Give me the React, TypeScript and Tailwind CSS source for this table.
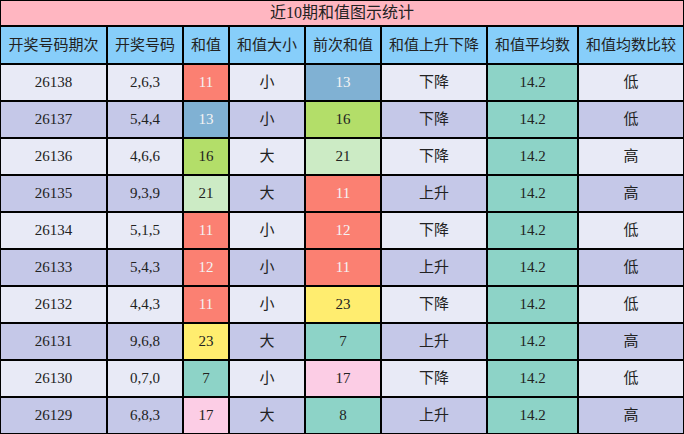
const rows = [
  ["26138", "2,6,3", 11, "小", 13, "下降", "低"],
  ["26137", "5,4,4", 13, "小", 16, "下降", "低"],
  ["26136", "4,6,6", 16, "大", 21, "下降", "高"],
  ["26135", "9,3,9", 21, "大", 11, "上升", "高"],
  ["26134", "5,1,5", 11, "小", 12, "下降", "低"],
  ["26133", "5,4,3", 12, "小", 11, "上升", "低"],
  ["26132", "4,4,3", 11, "小", 23, "下降", "低"],
  ["26131", "9,6,8", 23, "大", 7, "上升", "高"],
  ["26130", "0,7,0", 7, "小", 17, "下降", "低"],
  ["26129", "6,8,3", 17, "大", 8, "上升", "高"],
] as const;

// colour of a sum cell, by value
const sumColor: Record<number, string> = {
  7: "bg-[#8dd3c7] text-[#222]",
  8: "bg-[#8dd3c7] text-[#222]",
  11: "bg-[#fb8072] text-[#f4f4f4]",
  12: "bg-[#fb8072] text-[#f4f4f4]",
  13: "bg-[#80b1d3] text-[#f4f4f4]",
  16: "bg-[#b3de69] text-[#222]",
  17: "bg-[#fccde5] text-[#222]",
  21: "bg-[#ccebc5] text-[#222]",
  23: "bg-[#ffed6f] text-[#222]",
};

const headers = [
  "开奖号码期次",
  "开奖号码",
  "和值",
  "和值大小",
  "前次和值",
  "和值上升下降",
  "和值平均数",
  "和值均数比较",
];

const widths = ["w-[107px]", "w-[76px]", "w-[46px]", "w-[76px]", "w-[76px]", "w-[106px]", "w-[91px]", "w-[106px]"];

export default function App() {
  const cell = "border-2 border-black text-center p-0";
  return (
    <div className="w-[684px] h-[434px] overflow-hidden bg-white font-['Liberation_Serif','Noto_Sans_CJK_SC',serif] text-[#222]">
      <table className="w-[684px] table-fixed border-collapse -mt-px -ml-px">
        <colgroup>
          {widths.map((w, i) => (
            <col key={i} className={w} />
          ))}
        </colgroup>
        <thead>
          <tr className="h-[26px]">
            <th colSpan={8} className={`${cell} bg-[#ffb6c1] text-[16px] font-normal leading-none`}>
              近10期和值图示统计
            </th>
          </tr>
          <tr className="h-[38px]">
            {headers.map((h) => (
              <th key={h} className={`${cell} bg-[#87cefa] text-[15px] font-normal`}>
                {h}
              </th>
            ))}
          </tr>
        </thead>
        <tbody>
          {rows.map((r, i) => {
            const bg = i % 2 === 0 ? "bg-[#e8eaf6]" : "bg-[#c5c8e8]";
            return (
              <tr key={r[0]} className="h-[37px] text-[15px]">
                <td className={`${cell} ${bg}`}>{r[0]}</td>
                <td className={`${cell} ${bg}`}>{r[1]}</td>
                <td className={`${cell} ${sumColor[r[2]]}`}>{r[2]}</td>
                <td className={`${cell} ${bg}`}>{r[3]}</td>
                <td className={`${cell} ${sumColor[r[4]]}`}>{r[4]}</td>
                <td className={`${cell} ${bg}`}>{r[5]}</td>
                <td className={`${cell} bg-[#8dd3c7]`}>14.2</td>
                <td className={`${cell} ${bg}`}>{r[6]}</td>
              </tr>
            );
          })}
        </tbody>
      </table>
    </div>
  );
}
